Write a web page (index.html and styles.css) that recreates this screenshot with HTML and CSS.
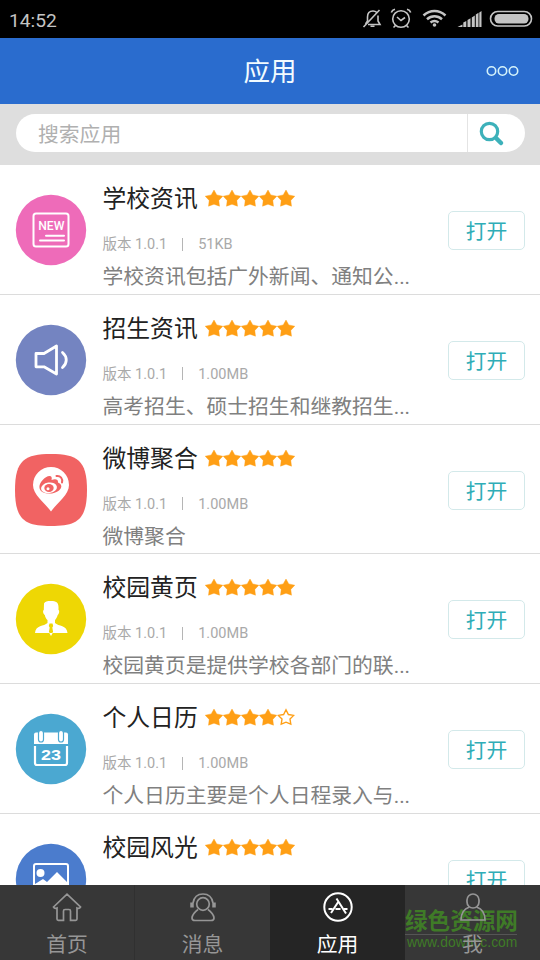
FILE: index.html
```html
<!DOCTYPE html>
<html lang="zh-CN">
<head>
<meta charset="utf-8">
<title>应用</title>
<link rel="stylesheet" href="styles.css">
</head>
<body>
<svg class="defs" aria-hidden="true">
  <symbol id="star" viewBox="0 0 18 18"><path d="M9 1l2.800 4.900 6 1.300-4 4.200.7 5.800L9 15.200 3.500 17.200l.7-5.800-4-4.200 6-1.300z" stroke="currentColor" stroke-width=".4" stroke-linejoin="round"/></symbol>
  <symbol id="star-empty" viewBox="0 0 18 18"><path d="M9 1.800l2.400 4.700 5.300.9-3.700 3.700.8 5.100L9 14.200 4.200 16.200l.8-5.100-3.700-3.700 5.300-.9z" fill="none" stroke="currentColor" stroke-width="1.400"/></symbol>
  <symbol id="stars5" viewBox="0 0 90 18">
    <use href="#star" width="18" height="18"/><use href="#star" x="18" width="18" height="18"/><use href="#star" x="36" width="18" height="18"/><use href="#star" x="54" width="18" height="18"/><use href="#star" x="72" width="18" height="18"/>
  </symbol>
  <symbol id="stars4" viewBox="0 0 90 18">
    <use href="#star" width="18" height="18"/><use href="#star" x="18" width="18" height="18"/><use href="#star" x="36" width="18" height="18"/><use href="#star" x="54" width="18" height="18"/><use href="#star-empty" x="72" width="18" height="18"/>
  </symbol>
</svg>
<div class="screen">
  <div class="status">
    <span class="time">14:52</span>
    <svg class="status-icons" width="180" height="37" viewBox="360 0 180 37" fill="none" stroke="#c4c4c4" stroke-width="1.600">
      <path d="M363.500 27L379.500 10M365.500 24l2-3v-4c0-4 2.500-6 5.500-6 1.500 0 2.800.5 3.700 1.300M378 15.500V21l2 3.500h-12"/>
      <path d="M370.500 26.200h4"/>
      <circle cx="401" cy="19" r="8.300"/><path d="M397 17l4 3.500 4-3M391.300 12.500c.5-1.500 2-2.800 3.700-3.200M410.700 12.500c-.5-1.500-2-2.800-3.700-3.200M395.500 25.500l-2 2M406.500 25.500l2 2"/>
      <g stroke-width="2.500"><path d="M423.500 15.500c6.500-6 15.500-6 22 0M427 19.200c4.500-4 10.500-4 15 0M430.500 22.600c2.500-2 5.500-2 8 0"/></g>
      <circle cx="434.500" cy="25" r="1.800" fill="#c4c4c4" stroke="none"/>
      <path fill="#c4c4c4" stroke="none" d="M457.500 27l5-2.500V27zM463.300 22.500l3-1.500v6h-3zM467.500 20l3-1.800V27h-3zM471.800 17.500l3-2v11.500h-3zM475.800 14.500l2.700-1.700V27h-2.700zM479.300 12.500l2.200-1.500v16h-2.200z"/>
      <rect x="490.500" y="11.500" width="41" height="14.500" rx="7.200"/><rect x="494.500" y="14" width="34" height="9.500" rx="4.500" fill="#c4c4c4" stroke="none"/>
    </svg>
  </div>
  <header class="header">
    <h1>应用</h1>
    <svg class="more" width="34" height="14" viewBox="0 0 34 14" fill="none" stroke="#d5f3fb" stroke-width="1.600"><circle cx="5.500" cy="7" r="4.200"/><circle cx="16.500" cy="7" r="4.200"/><circle cx="27.500" cy="7" r="4.200"/></svg>
  </header>
  <div class="search">
    <div class="field">
      <span class="placeholder">搜索应用</span>
      <span class="go"><svg width="26" height="26" viewBox="0 0 26 26" fill="none" stroke="#3db1ba"><circle cx="10.500" cy="10.500" r="8.200" stroke-width="3.200"/><path d="M17.500 17.500l4.500 4.500" stroke-width="4.500" stroke-linecap="round"/></svg></span>
    </div>
  </div>
  <main class="list">
    <article class="app">
      <svg class="icon" viewBox="0 0 72 72"><circle cx="36" cy="36" r="35.200" fill="#ee6bb9"/><rect x="18.500" y="19.500" width="35" height="33" rx="2.500" fill="none" stroke="#fff" stroke-width="2"/><text x="36.300" y="36" class="new">NEW</text><path d="M31 41.800h18M25 46.500h24" stroke="#fff" stroke-width="2" stroke-linecap="round"/></svg>
      <div class="info"><div class="title"><h2>学校资讯</h2><svg class="stars"><use href="#stars5"/></svg></div><div class="meta"><span>版本 1.0.1</span><i></i><span>51KB</span></div><p>学校资讯包括广外新闻、通知公...</p></div>
      <button class="open">打开</button>
    </article>
    <article class="app">
      <svg class="icon" viewBox="0 0 72 72"><circle cx="36" cy="36" r="35.200" fill="#7484c1"/><path d="M21 29.500h8l12.500-7.500v28L29 42.800h-8zM47.500 28.500c5 4.500 5 10.500 0 15" fill="none" stroke="#fff" stroke-width="2.800" stroke-linejoin="round" stroke-linecap="round"/></svg>
      <div class="info"><div class="title"><h2>招生资讯</h2><svg class="stars"><use href="#stars5"/></svg></div><div class="meta"><span>版本 1.0.1</span><i></i><span>1.00MB</span></div><p>高考招生、硕士招生和继教招生...</p></div>
      <button class="open">打开</button>
    </article>
    <article class="app">
      <svg class="icon" viewBox="0 0 72 72"><path d="M36 0C62 0 72 6 72 36S62 72 36 72 0 66 0 36 10 0 36 0z" fill="#f16363"/><path d="M36 57.500C30 49 18 41 18 31a18 18 0 0 1 36 0c0 10-12 18-18 26.500z" fill="#fff"/><path d="M24.500 34c-1-5 6-12.500 10.500-12 2 .3 2 2.500 1.500 4 3.500-1.500 7-1 6.500 2.500 4 1.500 4.500 5 1 8-5.500 4.800-18.500 4-19.500-2.500z" fill="#f16363"/><ellipse cx="34" cy="33.800" rx="8" ry="5.300" fill="#fff" transform="rotate(-8 34 33.800)"/><ellipse cx="34" cy="34" rx="4.700" ry="4" fill="#f16363"/><circle cx="33" cy="34.800" r="1.500" fill="#fff"/><path d="M41.500 22c4-.5 6.500 2.500 5.500 6.500" fill="none" stroke="#f16363" stroke-width="2" stroke-linecap="round"/></svg>
      <div class="info"><div class="title"><h2>微博聚合</h2><svg class="stars"><use href="#stars5"/></svg></div><div class="meta"><span>版本 1.0.1</span><i></i><span>1.00MB</span></div><p>微博聚合</p></div>
      <button class="open">打开</button>
    </article>
    <article class="app">
      <svg class="icon" viewBox="0 0 72 72"><circle cx="36" cy="36" r="35.200" fill="#eed704"/><path d="M29 20.500c1-2 3-2.500 7-2.500 5 0 7.500 1.500 7.500 6v3c1.200.5.800 4-.8 5-.7 2.500-1.700 4-2.700 5v3c3.500 3.500 12 2 12.500 10H20c.5-8 9-6.500 12.500-10v-3c-1.200-1-2.200-2.500-2.700-5-1.800-1-2.200-4.500-1-5z" fill="#fff"/><path d="M34.500 40.500h3l.7 2.500-.9 1.500.8 4.500-2.100 2-2.100-2 .8-4.500-.9-1.500z" fill="#eed704"/><path d="M34.300 50h3.400L36 53z" fill="#fff"/></svg>
      <div class="info"><div class="title"><h2>校园黄页</h2><svg class="stars"><use href="#stars5"/></svg></div><div class="meta"><span>版本 1.0.1</span><i></i><span>1.00MB</span></div><p>校园黄页是提供学校各部门的联...</p></div>
      <button class="open">打开</button>
    </article>
    <article class="app">
      <svg class="icon" viewBox="0 0 72 72"><circle cx="36" cy="36" r="35.200" fill="#4ba8d1"/><path d="M19 31v-9.500q0-2 2-2h30q2 0 2 2V31z" fill="#fff"/><path d="M20 33v17q0 2 2 2h28q2 0 2-2V33" fill="none" stroke="#fff" stroke-width="2.200"/><g fill="#fff" stroke="#4ba8d1" stroke-width="1.200"><rect x="23.500" y="17.500" width="5" height="11.500" rx="2.500"/><rect x="43.500" y="17.500" width="5" height="11.500" rx="2.500"/></g><text x="36" y="46.500" class="date" textLength="20" lengthAdjust="spacingAndGlyphs">23</text></svg>
      <div class="info"><div class="title"><h2>个人日历</h2><svg class="stars"><use href="#stars4"/></svg></div><div class="meta"><span>版本 1.0.1</span><i></i><span>1.00MB</span></div><p>个人日历主要是个人日程录入与...</p></div>
      <button class="open">打开</button>
    </article>
    <article class="app">
      <svg class="icon" viewBox="0 0 72 72"><circle cx="36" cy="36" r="35.200" fill="#4b7ccd"/><rect x="19" y="21" width="34" height="31" rx="2" fill="none" stroke="#fff" stroke-width="2"/><circle cx="25.500" cy="30" r="4" fill="#fff"/><path d="M20 41l8-5 4 3 10-10 10 10v12H20z" fill="#fff"/></svg>
      <div class="info"><div class="title"><h2>校园风光</h2><svg class="stars"><use href="#stars5"/></svg></div></div>
      <button class="open">打开</button>
    </article>
  </main>
  <nav class="tabs">
    <a class="tab"><svg viewBox="0 0 32 32"><path d="M2.500 16L16 3.200 29.500 16q-1 2-3.500 1v11q0 1.300-1.300 1.300h-5.200V20q0-1.500-1.500-1.500h-4q-1.500 0-1.500 1.500v9.300H7.300Q6 29.300 6 28V17q-2.500 1-3.500-1z"/></svg><span>首页</span></a>
    <a class="tab"><svg viewBox="0 0 32 32"><circle cx="16" cy="13" r="6.300"/><path d="M11 18.500c-3 2-6 6-6 8.500 0 1.800 1.200 2.500 3 2.500h16c1.800 0 3-.7 3-2.500 0-2.500-3-6.500-6-8.500M6 12C7 6 11 3 16 3s9 3 10 9"/><path d="M5 11.500v5M27 11.500v5" stroke-width="3.500"/></svg><span>消息</span></a>
    <a class="tab active"><svg viewBox="0 0 32 32"><circle cx="16" cy="16" r="13.700"/><path d="M14.500 7.500L24 22.500M16.500 10.500L9 22M6.500 18h4M13.500 18h5M22 18h3.500"/></svg><span>应用</span></a>
    <a class="tab"><svg viewBox="0 0 32 32"><rect x="10" y="3" width="12" height="14" rx="6"/><path d="M12.500 16C6.500 18 4 22 4 29h24c0-7-2.500-11-8.500-13"/></svg><span>我</span></a>
    <div class="watermark"><b>绿色资源网</b><span>www.downcc.com</span></div>
  </nav>
</div>
</body>
</html>
```
FILE: styles.css
```css
* { box-sizing: border-box; }
body { margin: 0; font-family: Roboto, "Noto Sans CJK SC", sans-serif; background: #fff; }
h1, h2, p { margin: 0; font-weight: 400; }
.defs { position: absolute; width: 0; height: 0; }
.screen { width: 540px; height: 960px; display: flex; flex-direction: column; overflow: hidden; }
.status { flex: none; height: 37.500px; background: #000; display: flex; justify-content: space-between; padding-left: 9px; }
.time { font-size: 19.200px; line-height: 41px; color: #c4c4c4; }
.header { flex: none; height: 66px; background: #2a6cce; display: grid; grid-template-columns: 1fr auto 1fr; align-items: center; padding: 0 20px; }
h1 { grid-column: 2; font-size: 26.500px; line-height: 40px; padding-top: 3px; color: #f2fbff; }
.more { justify-self: end; }
.search { flex: none; height: 61.500px; background: #dedede; padding: 10.500px 15.500px 0 16px; }
.field { height: 38px; border-radius: 19px; background: #fff; display: flex; }
.placeholder { flex: 1; padding-left: 22px; font-size: 20.800px; line-height: 43px; color: #b0b0b0; }
.go { width: 58px; border-left: 1px solid #e4e4e4; padding: 7px 0 0 11px; }
.go svg { display: block; }
.list { flex: 1; min-height: 0; overflow: hidden; }
.app { height: 129.750px; border-bottom: 1px solid #dcdcdc; display: flex; padding: 0 15px; }
.icon { flex: none; width: 72px; height: 72px; margin-top: 29px; }
.new { font: 500 12.200px Roboto, sans-serif; fill: #fff; text-anchor: middle; }
.date { font: 700 15.500px "Liberation Sans", sans-serif; fill: #fff; text-anchor: middle; }
.info { flex: 1; margin-left: 15.500px; }
.title { display: flex; align-items: center; gap: 7.500px; height: 36px; margin-top: 15px; }
h2 { font-size: 23.800px; line-height: 36px; padding-top: 2px; color: #222; }
.stars { width: 90px; height: 18px; fill: #ff9f15; color: #ff9f15; }
.meta { display: flex; align-items: center; font-size: 14.500px; line-height: 20px; color: #a9a9a9; margin-top: 19px; }
.meta i { width: 1px; height: 13px; background: #b5b5b5; margin: 0 15px; position: relative; top: -1px; }
p { font-size: 20.800px; line-height: 30px; margin-top: 7px; color: #808080; white-space: nowrap; }
.open { flex: none; width: 77px; height: 39px; margin: 46px 0 0; padding: 2px 0 0; border: 1px solid #d3e9ea; border-radius: 5px; background: #fff; color: #2fadb7; font: 400 20.800px/36px Roboto, "Noto Sans CJK SC", sans-serif; }
.tabs { flex: none; height: 75px; background: #373737; display: grid; grid-template-columns: repeat(4, 1fr); position: relative; }
.tab { display: flex; flex-direction: column; align-items: center; padding-top: 6px; color: #969696; z-index: 1; }
.tab:first-child { border-right: 1px solid #303030; }
.tab svg { width: 32px; height: 32px; fill: none; stroke: currentColor; stroke-width: 1.700; }
.tab span { font-size: 20.800px; line-height: 30px; margin-top: 7px; }
.tab.active { background: #252525; color: #fff; }
.tab.active svg { stroke-width: 2; }
.watermark { position: absolute; left: 405px; top: 24px; width: 112px; color: #3f7b27; }
.watermark b { display: block; font-size: 22.600px; line-height: 25px; border-bottom: 1px solid #555; white-space: nowrap; }
.watermark span { display: block; font: 13.900px/14px "Liberation Sans", sans-serif; padding: 0 0 0 2px; }
```
